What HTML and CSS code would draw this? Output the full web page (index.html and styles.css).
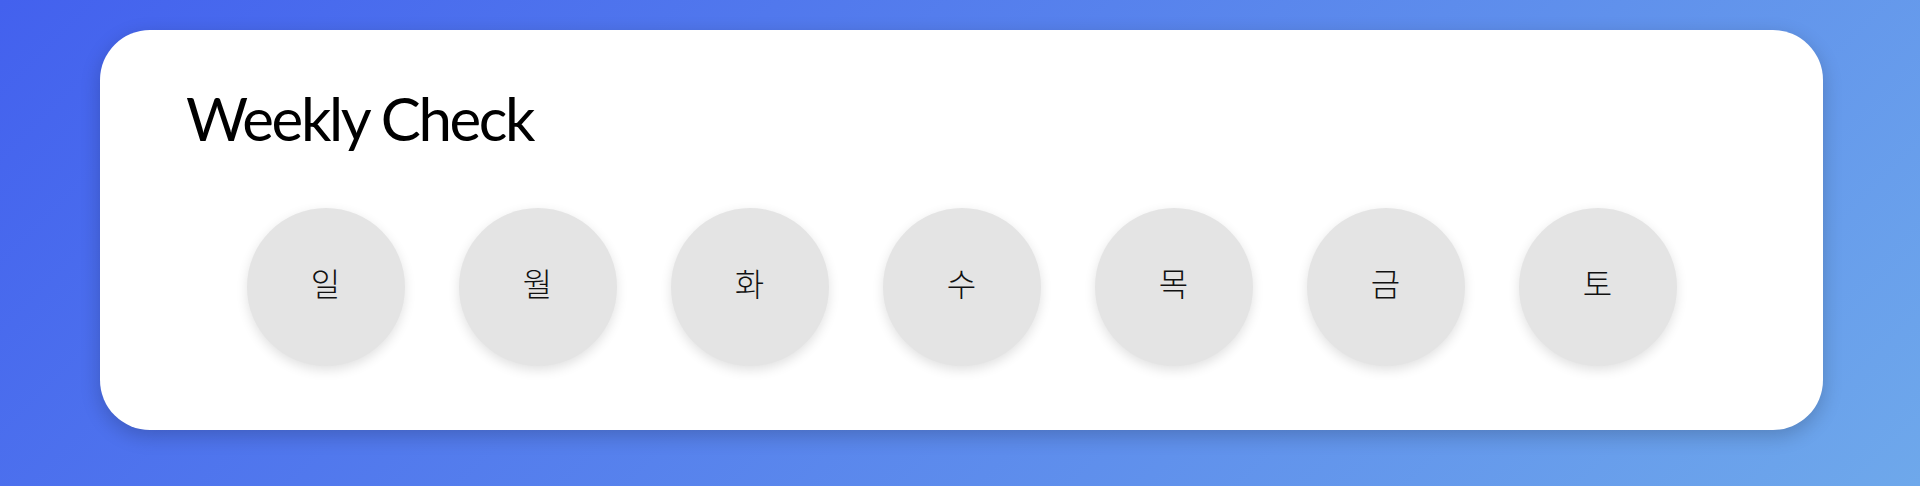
FILE: index.html
```html
<!DOCTYPE html>
<html lang="ko">
<head>
  <meta charset="UTF-8" />
  <meta name="viewport" content="width=device-width, initial-scale=1.0"/>
  <title>Weekly Check</title>
  <link rel="stylesheet" href="styles.css">
</head>
<body>
  <div class="card">
    <h1>Weekly Check</h1>
    <div class="days">
      <button class="day">일</button>
      <button class="day">월</button>
      <button class="day">화</button>
      <button class="day">수</button>
      <button class="day">목</button>
      <button class="day">금</button>
      <button class="day">토</button>
    </div>
  </div>
</body>
</html>
```

FILE: styles.css
```css
html, body {
  height: 100%;
}
body {
  margin: 0;
  font-family: Lato, "Noto Sans CJK KR", sans-serif;
  background: linear-gradient(135deg, #4361ee, #6ea8eb);
  color: black;
  box-sizing: border-box;
  padding-top: 30px;
}
.card {
  width: 1723px;
  height: 400px;
  margin-left: 100px;
  box-sizing: border-box;
  padding: 52px 86px 0;
  background: white;
  border-radius: 50px;
  box-shadow: 0 6px 20px rgba(0, 0, 0, 0.2);
}
h1 {
  margin: 0;
  font-size: 60px;
  font-weight: 400;
  letter-spacing: -2.4px;
}
.days {
  display: flex;
  justify-content: center;
  gap: 54px;
  margin-top: 54px;
}
.day {
  width: 158px;
  height: 158px;
  border: none;
  border-radius: 50%;
  background: #e4e4e4;
  box-shadow: 0 4px 12px rgba(0, 0, 0, 0.12);
  font-family: "Noto Sans CJK KR", sans-serif;
  font-size: 32px;
  font-weight: 300;
  color: #111;
  cursor: pointer;
  padding: 0 0 10px;
}
```
